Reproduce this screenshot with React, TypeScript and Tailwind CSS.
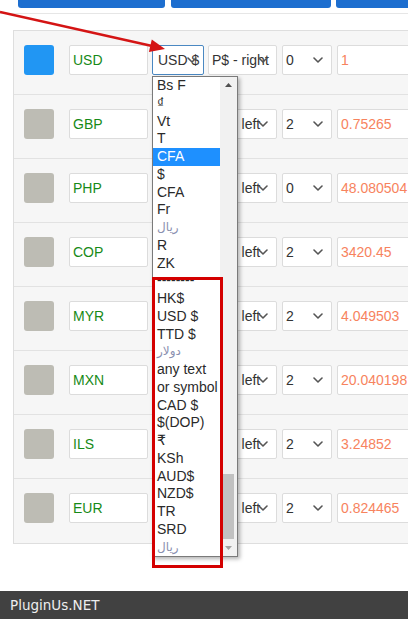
import React from "react";

const rows = [
  { code: "USD", sym: "USD $", pos: "P$ - right", dec: "0", rate: "1", active: true },
  { code: "GBP", sym: "£", pos: "P$ - left", dec: "2", rate: "0.75265" },
  { code: "PHP", sym: "₱", pos: "P$ - left", dec: "0", rate: "48.080504" },
  { code: "COP", sym: "$", pos: "P$ - left", dec: "2", rate: "3420.45" },
  { code: "MYR", sym: "RM", pos: "P$ - left", dec: "2", rate: "4.049503" },
  { code: "MXN", sym: "$", pos: "P$ - left", dec: "2", rate: "20.040198" },
  { code: "ILS", sym: "₪", pos: "P$ - left", dec: "2", rate: "3.24852" },
  { code: "EUR", sym: "€", pos: "P$ - left", dec: "2", rate: "0.824465" },
];

const items: { t: string; hl?: boolean; ar?: boolean }[] = [
  { t: "Bs F" },
  { t: "₫" },
  { t: "Vt" },
  { t: "T" },
  { t: "CFA", hl: true },
  { t: "$" },
  { t: "CFA" },
  { t: "Fr" },
  { t: "ريال", ar: true },
  { t: "R" },
  { t: "ZK" },
  { t: "--------" },
  { t: "HK$" },
  { t: "USD $" },
  { t: "TTD $" },
  { t: "دولار", ar: true },
  { t: "any text" },
  { t: "or symbol" },
  { t: "CAD $" },
  { t: "$(DOP)" },
  { t: "₹" },
  { t: "KSh" },
  { t: "AUD$" },
  { t: "NZD$" },
  { t: "TR" },
  { t: "SRD" },
  { t: "ريال", ar: true },
];

function Chevron({ className }: { className: string }) {
  return (
    <svg className={className} width="10" height="6" viewBox="0 0 10 6" fill="none">
      <path d="M1 1 L5 5 L9 1" stroke="#555" strokeWidth="1.6" strokeLinecap="round" strokeLinejoin="round" />
    </svg>
  );
}

export default function App() {
  return (
    <div className="relative w-[408px] h-[619px] bg-white overflow-hidden font-['Liberation_Sans','DejaVu_Sans',Arial,sans-serif] text-[14px]">
      {/* top buttons */}
      <div className="w-[520px] h-[14px] border-b border-[#e6e6e6] flex">
        <div className="shrink-0 ml-[18px] w-[147px] h-[8px] bg-[#1d6ecf] rounded-b-[3px]" />
        <div className="shrink-0 ml-[6px] w-[160px] h-[8px] bg-[#1d6ecf] rounded-b-[3px]" />
        <div className="shrink-0 ml-[5px] w-[120px] h-[8px] bg-[#1d6ecf] rounded-b-[3px]" />
      </div>

      {/* panel */}
      <div className="mt-[16px] ml-[13px] w-[460px] bg-[#f6f6f6] border border-[#dedede]">
        {rows.map((r, i) => (
          <div
            key={r.code}
            className={`h-[64px] flex items-start pt-[14px] pl-[10px] ${i < rows.length - 1 ? "border-b border-[#e2e2e2]" : ""}`}
          >
            <div className={`shrink-0 w-[30px] h-[30px] rounded-[3px] ${r.active ? "bg-[#2196f3]" : "bg-[#bdbcb4]"}`} />
            <div className="shrink-0 ml-[15px] w-[79px] h-[30px] bg-white border border-[#dcdcdc] rounded-[2px] flex items-center pl-[3px] text-[#178a17]">
              {r.code}
            </div>
            <div
              className={`shrink-0 relative ml-[4px] w-[52px] h-[30px] bg-white border rounded-[2px] flex items-center pl-[5px] overflow-hidden whitespace-nowrap text-[#333] ${r.active ? "border-[#4a88c2]" : "border-[#dcdcdc]"}`}
            >
              {r.sym}
              <Chevron className="absolute right-[6px] top-[11px]" />
            </div>
            <div className="shrink-0 relative ml-[4px] w-[69px] h-[30px] bg-white border border-[#dcdcdc] rounded-[2px] flex items-center pl-[3px] overflow-hidden whitespace-nowrap text-[#333]">
              {r.pos}
              <Chevron className="absolute right-[8px] top-[11px]" />
            </div>
            <div className="shrink-0 relative ml-[5px] w-[50px] h-[30px] bg-white border border-[#dcdcdc] rounded-[2px] flex items-center pl-[3px] text-[#333]">
              {r.dec}
              <Chevron className="absolute right-[8px] top-[11px]" />
            </div>
            <div className="shrink-0 ml-[5px] w-[100px] h-[30px] bg-white border border-[#dcdcdc] rounded-[2px] flex items-center pl-[3px] text-[#f7835e]">
              {r.rate}
            </div>
          </div>
        ))}
      </div>

      {/* footer */}
      <div className="absolute left-0 bottom-0 w-full h-[28px] bg-[#414141] flex items-center pl-[10px] font-['DejaVu_Sans',sans-serif] text-[13.5px] text-[#eeeeee]">
        PluginUs.NET
      </div>

      {/* dropdown */}
      <div className="absolute left-[152px] top-[76px] w-[86px] h-[481px] bg-white border border-[#7a7a7a] shadow-[2px_2px_4px_rgba(0,0,0,0.3)] flex">
        <div className="w-[67px] flex flex-col">
          {items.map((it, i) => (
            <div
              key={i}
              className={`h-[17.75px] leading-[17.75px] pl-[4px] whitespace-nowrap ${it.hl ? "bg-[#1e90ff] text-white" : it.ar ? "text-[#8a90b0] font-['DejaVu_Sans',sans-serif] text-[12px]" : "text-[#2a2a2a]"}`}
            >
              {it.t}
            </div>
          ))}
        </div>
        <div className="relative w-[17px] bg-[#f1f1f1]">
          <svg className="absolute left-[5px] top-[6px]" width="7" height="4" viewBox="0 0 7 4">
            <path d="M0 4 L3.5 0 L7 4 Z" fill="#505050" />
          </svg>
          <div className="absolute left-[2px] top-[397px] w-[12px] h-[65px] bg-[#c1c1c1]" />
          <svg className="absolute left-[5px] bottom-[6px]" width="7" height="4" viewBox="0 0 7 4">
            <path d="M0 0 L3.5 4 L7 0 Z" fill="#a3a3a3" />
          </svg>
        </div>
      </div>

      {/* red highlight box */}
      <div className="absolute left-[152px] top-[277px] w-[71px] h-[291px] border-[3px] border-[#d40000]" />

      {/* red arrow */}
      <svg className="absolute left-0 top-0" width="180" height="60" viewBox="0 0 180 60">
        <line x1="0" y1="12" x2="151" y2="45.7" stroke="#d41414" strokeWidth="2.5" />
        <polygon points="165,49 148.9,52.1 151.8,39.4" fill="#d41414" />
      </svg>
    </div>
  );
}
